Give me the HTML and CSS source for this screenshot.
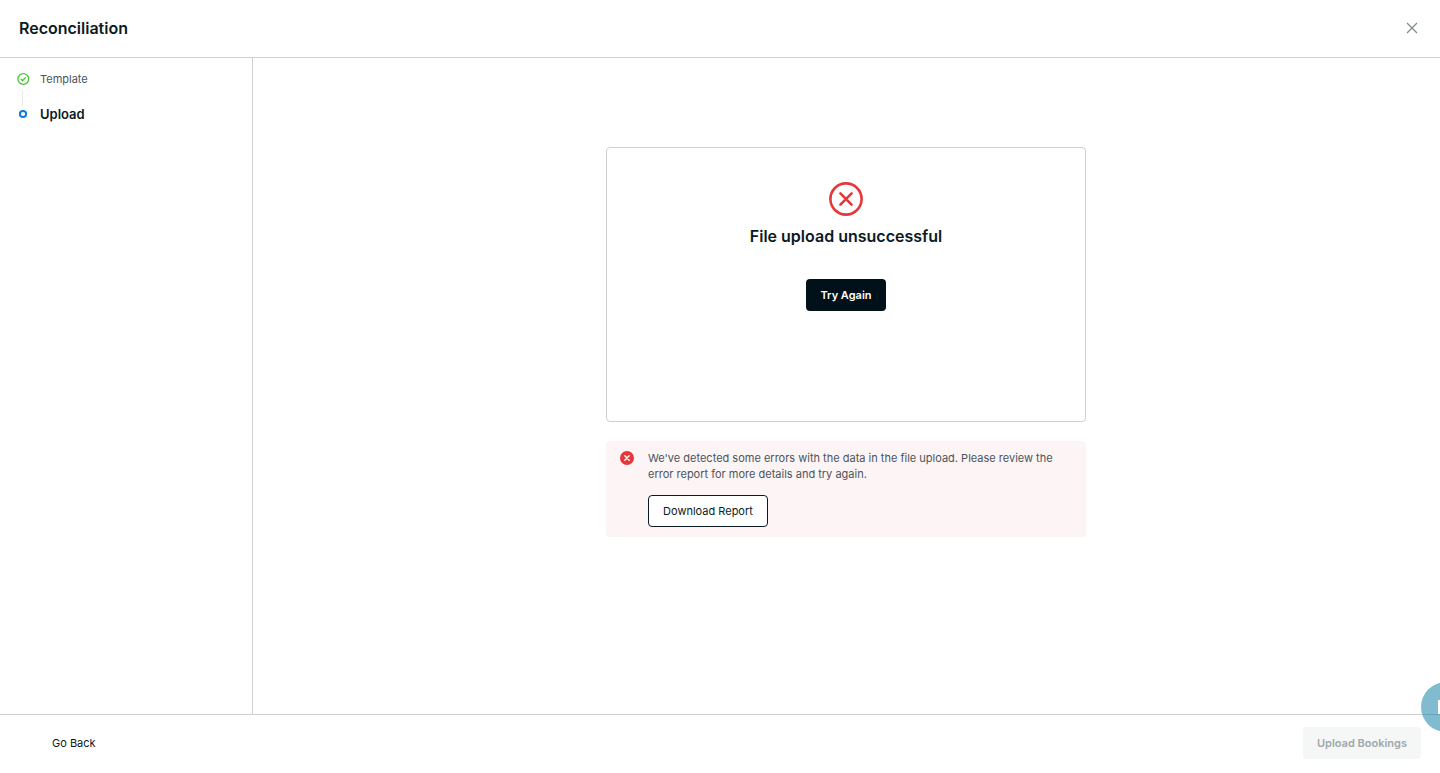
FILE: index.html
```html
<!DOCTYPE html>
<html lang="en">
<head>
<meta charset="utf-8">
<meta name="viewport" content="width=device-width, initial-scale=1">
<title>Reconciliation</title>
<link rel="stylesheet" href="styles.css">
</head>
<body>
<div class="app">
  <header class="header">
    <h1 class="title">Reconciliation</h1>
    <button class="close" type="button" aria-label="Close">
      <svg width="12" height="12" viewBox="0 0 12 12" fill="none" stroke="currentColor" stroke-width="1.3"><path d="M1 1l10 10M11 1L1 11"/></svg>
    </button>
  </header>
  <div class="body">
    <nav class="sidebar" aria-label="Steps">
      <ol class="steps">
        <li class="step">
          <svg class="step-icon" width="14" height="14" viewBox="0 0 14 14" fill="none" stroke="#42c82f" stroke-width="1.3" stroke-linecap="round" stroke-linejoin="round"><circle cx="7.3" cy="7" r="5.4"/><path d="M5.1 7.3l1.5 1.4 2.9-3.1"/></svg>
          <span>Template</span>
        </li>
        <li class="connector" aria-hidden="true"></li>
        <li class="step step-current" aria-current="step">
          <svg class="step-icon" width="14" height="14" viewBox="0 0 14 14" fill="none" stroke="#0f7be0" stroke-width="2"><circle cx="7" cy="7" r="3.1"/></svg>
          <span>Upload</span>
        </li>
      </ol>
    </nav>
    <main class="main">
      <section class="card">
        <svg width="34" height="34" viewBox="0 0 34 34" fill="none" stroke="#e5383b" stroke-width="2.6" stroke-linecap="round"><circle cx="17" cy="17" r="15.6"/><path d="M11.4 11.4l11.2 11.2M22.6 11.4L11.4 22.6"/></svg>
        <h2 class="card-title">File upload unsuccessful</h2>
        <button class="button button-dark" type="button">Try Again</button>
      </section>
      <section class="alert" role="alert">
        <svg class="alert-icon" width="14" height="14" viewBox="0 0 14 14"><circle cx="7" cy="7" r="7" fill="#e5383b"/><path d="M4.8 4.8l4.4 4.4M9.2 4.8L4.8 9.2" stroke="#fff" stroke-width="1.4" stroke-linecap="round"/></svg>
        <div class="alert-content">
          <p class="alert-text">We've detected some errors with the data in the file upload. Please review the error report for more details and try again.</p>
          <button class="button button-outline" type="button">Download Report</button>
        </div>
      </section>
    </main>
  </div>
  <footer class="footer">
    <button class="button button-plain" type="button">Go Back</button>
    <button class="button button-disabled" type="button" disabled>Upload Bookings</button>
  </footer>
</div>
<button class="chat" type="button" aria-label="Open chat">
  <svg width="20" height="20" viewBox="0 0 20 20"><path d="M2 3h16v14H2z" fill="#fff"/></svg>
</button>
</body>
</html>
```
FILE: styles.css
```css
* {
  box-sizing: border-box;
}

body {
  margin: 0;
  overflow: hidden;
  background: #fff;
  color: #0b1a22;
  font-family: Inter, "Liberation Sans", sans-serif;
  font-size: 11px;
  line-height: 16px;
}

h1, h2, p, ol {
  margin: 0;
  padding: 0;
}

.app {
  display: flex;
  flex-direction: column;
  height: 100vh;
}

.header {
  display: flex;
  align-items: center;
  justify-content: space-between;
  padding: 16px 20px 17px 19px;
  border-bottom: 1px solid #cdd1d2;
}

.title, .card-title {
  font-size: 16px;
  line-height: 24px;
  font-weight: 600;
}

.close {
  display: flex;
  padding: 2px;
  border: 0;
  background: none;
  color: #7f8a8f;
}

.body {
  display: flex;
  flex: 1;
  min-height: 0;
}

.sidebar {
  width: 253px;
  padding: 13px 16px;
  border-right: 1px solid #cdd1d2;
}

.steps {
  list-style: none;
}

.step {
  display: flex;
  align-items: center;
  gap: 10px;
  color: #4a555b;
}

.step-current {
  color: #0b1a22;
  font-size: 13px;
  font-weight: 600;
}

.connector {
  width: 1px;
  height: 16px;
  margin: 3px 0 0 6px;
  background: #e8eaeb;
}

.main {
  display: flex;
  flex: 1;
  flex-direction: column;
  align-items: center;
  gap: 19px;
  padding: 89px 1px 0 0;
}

.card {
  display: flex;
  flex-direction: column;
  align-items: center;
  width: 480px;
  min-height: 275px;
  padding: 34px 20px;
  border: 1px solid #cdd1d2;
  border-radius: 4px;
}

.card-title {
  margin: 8px 0 31px;
}

.alert {
  display: flex;
  gap: 14px;
  width: 480px;
  padding: 10px 14px;
  border-radius: 4px;
  background: #fdf4f5;
}

.alert-icon {
  flex: none;
}

.alert-text {
  margin: -1px 0 13px;
  color: #4a555b;
}

.button {
  height: 32px;
  padding: 0 13px;
  border: 1px solid transparent;
  border-radius: 4px;
  font: inherit;
}

.button-dark {
  background: #00111a;
  color: #fff;
  font-weight: 600;
}

.button-outline {
  min-width: 120px;
  border-color: #0b1a22;
  background: #fff;
  color: #0b1a22;
}

.button-plain {
  background: none;
  color: #0b1a22;
}

.button-disabled {
  background: #f5f7f7;
  color: #a0a8ab;
  font-weight: 600;
}

.footer {
  display: flex;
  justify-content: space-between;
  padding: 12px 19px 14px 38px;
  border-top: 1px solid #cdd1d2;
}

.chat {
  position: fixed;
  right: -31px;
  bottom: 41px;
  display: flex;
  align-items: center;
  justify-content: center;
  width: 50px;
  height: 50px;
  padding: 0;
  border: 0;
  border-radius: 50%;
  background: #0578a0;
  opacity: 0.5;
}
```
